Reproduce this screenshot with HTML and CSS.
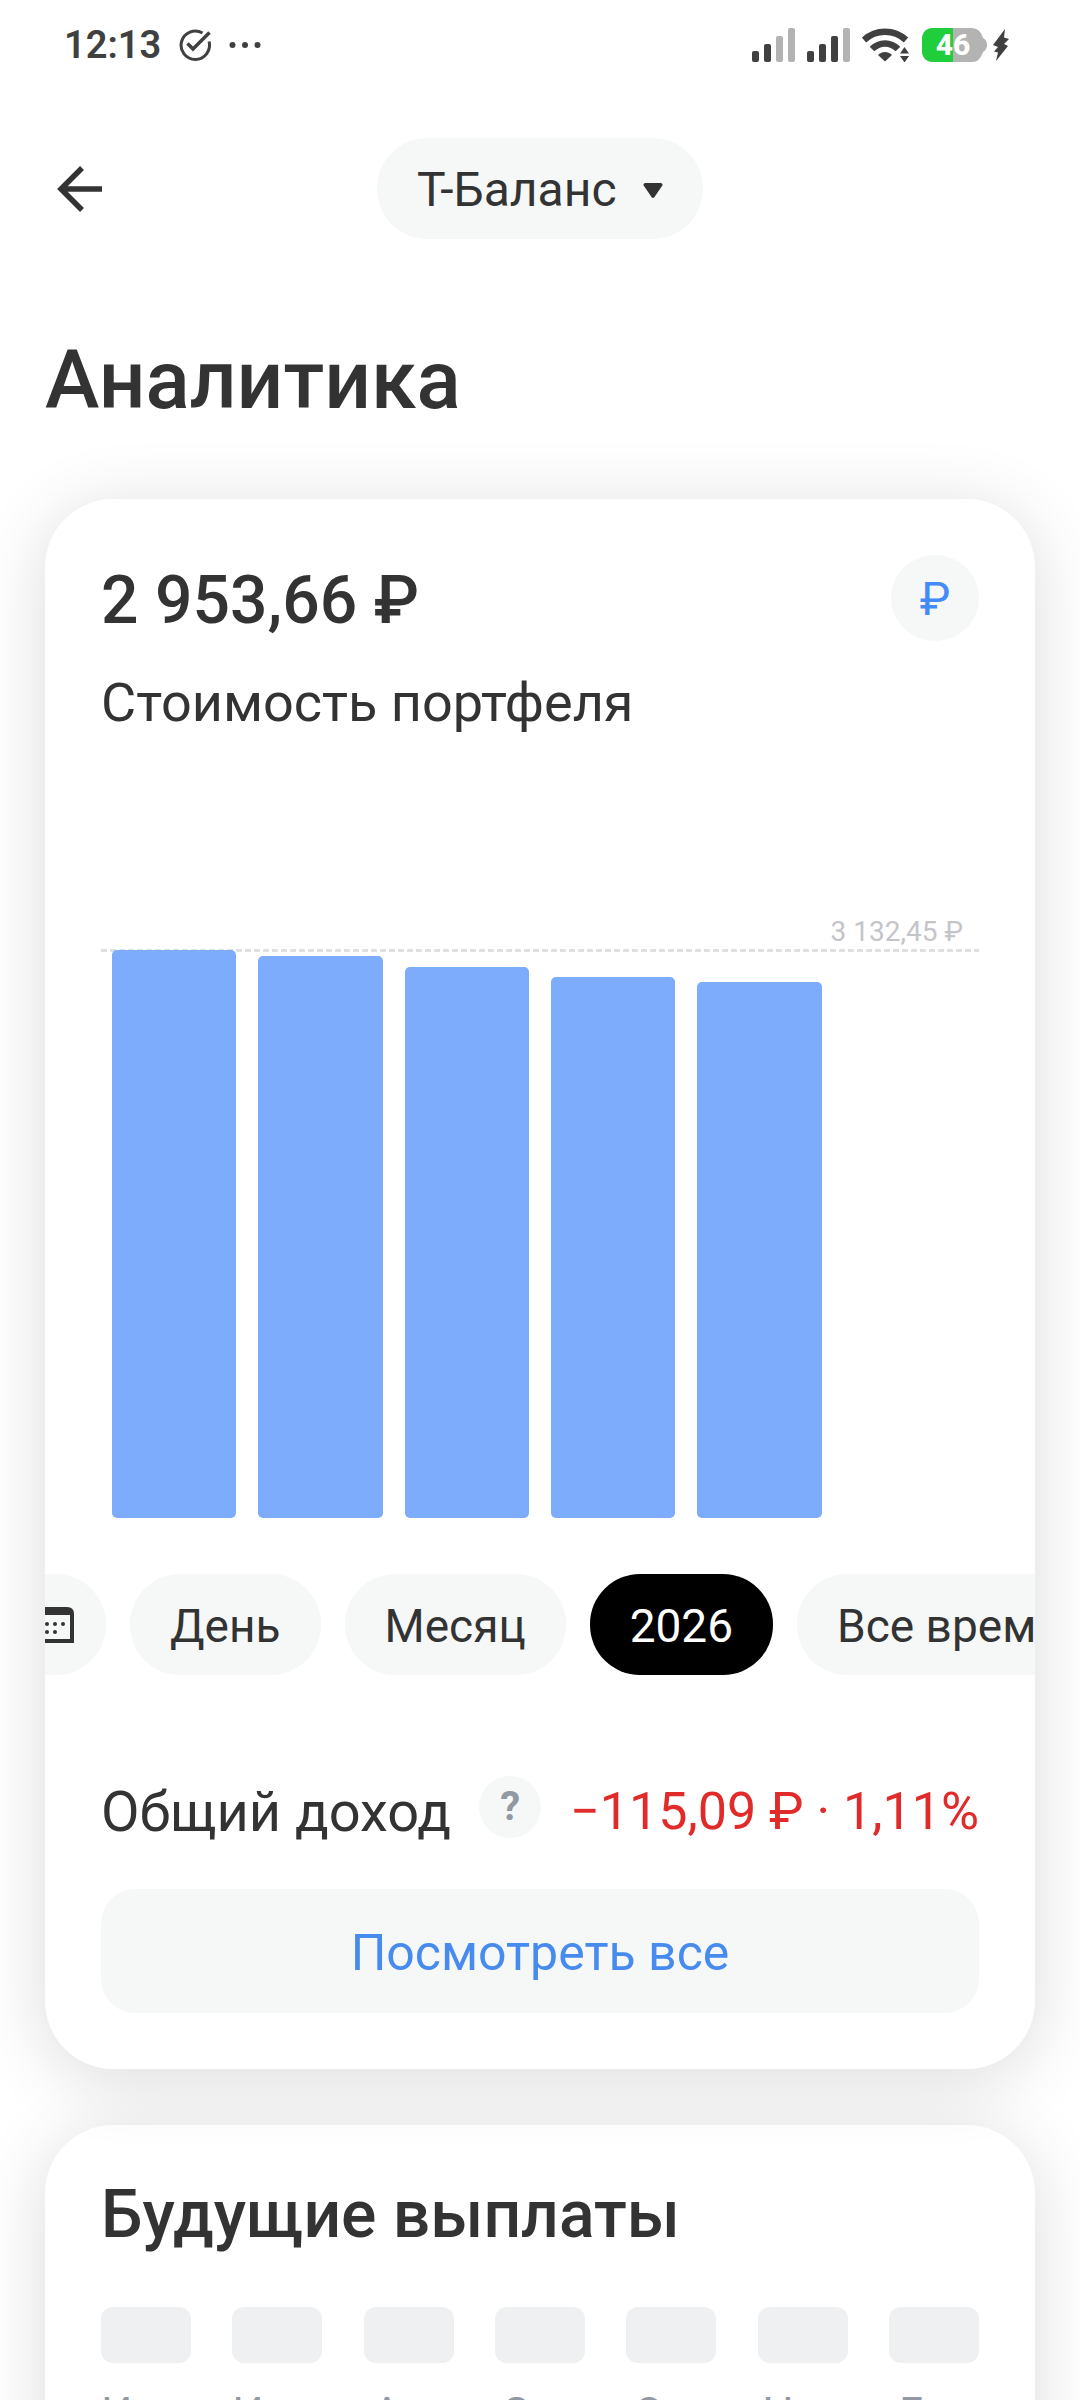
FILE: index.html
```
<!DOCTYPE html>
<html lang="ru">
<head>
    <meta charset="UTF-8">
    <meta name="viewport" content="width=device-width, initial-scale=1.0">
    <title>Аналитика</title>
    <link rel="stylesheet" href="styles.css">
</head>
<body>
<div class="screen">
    <div class="status">
        <div class="status-left">
            <span class="time">12:13</span>
            <svg class="check" width="32" height="32" viewBox="0 0 32 32" fill="none" stroke="#404040" stroke-width="3">
                <path d="M23.500 4A14.200 14.200 0 1 0 30 12.500"/>
                <path d="M8.500 14.500L14 20L30.500 3.500" stroke-width="3.500"/>
            </svg>
            <svg width="32" height="8" viewBox="0 0 32 8" fill="#404040">
                <circle cx="3.500" cy="4" r="3"/>
                <circle cx="16" cy="4" r="3"/>
                <circle cx="28.500" cy="4" r="3"/>
            </svg>
        </div>
        <div class="status-right">
            <svg width="43" height="34" viewBox="0 0 43 34" fill="#404040">
                <rect x="0" y="23" width="7" height="11" rx="2"/>
                <rect x="12" y="16" width="7" height="18" rx="2"/>
                <rect x="24" y="8" width="7" height="26" rx="2" fill="#b3b3b3"/>
                <rect x="36" y="0" width="7" height="34" rx="2" fill="#b3b3b3"/>
            </svg>
            <svg width="43" height="34" viewBox="0 0 43 34" fill="#404040">
                <rect x="0" y="23" width="7" height="11" rx="2"/>
                <rect x="12" y="16" width="7" height="18" rx="2"/>
                <rect x="24" y="8" width="7" height="26" rx="2"/>
                <rect x="36" y="0" width="7" height="34" rx="2" fill="#b3b3b3"/>
            </svg>
            <svg width="48" height="34" viewBox="0 0 48 34">
                <g fill="none" stroke="#404040" stroke-width="6.500">
                    <path d="M2 12C14 1 32 1 44 12"/>
                    <path d="M10 21C17.500 13.500 28.500 13.500 36 21"/>
                </g>
                <path d="M16 27C20 23 26 23 30 27L23 33.500Z" fill="#404040"/>
                <path d="M42.500 19L47 25.500H38ZM42.500 34.500L38 28H47Z" fill="#404040"/>
            </svg>
            <div class="battery">
                <svg width="66" height="34" viewBox="0 0 66 34">
                    <path d="M12 0H50Q58 0 61 10Q65 12 65 17Q65 22 61 24Q58 34 50 34H12Q0 34 0 22V12Q0 0 12 0Z" fill="#b3b3b3"/>
                    <path d="M31 0H12Q0 0 0 12V22Q0 34 12 34H31Z" fill="#20ce3b"/>
                </svg>
                <span class="battery-level">46</span>
            </div>
            <svg class="bolt" width="18" height="34" viewBox="0 0 18 34" fill="#404040">
                <path d="M13 1L1 17L6 19L2 23.500L6 24.500L4 33L16 18L12 16L17 11L12 9.500Z"/>
            </svg>
        </div>
    </div>

    <header class="topbar">
        <button class="back" aria-label="Назад">
            <svg width="48" height="48" viewBox="0 0 48 48" fill="none" stroke="#333" stroke-width="5.500">
                <path d="M26 3L5 24L26 45M5 24H46"/>
            </svg>
        </button>
        <div class="account">
            <select aria-label="Счёт">
                <option>Т-Баланс</option>
            </select>
            <svg class="account-arrow" width="20" height="16" viewBox="0 0 20 16" fill="#333">
                <path d="M2 0H18Q20.500 1 19 3L11.500 14Q10 16 8.500 14L1 3Q-0.500 1 2 0Z"/>
            </svg>
        </div>
    </header>

    <h1>Аналитика</h1>

    <main>
        <section class="card portfolio">
            <div class="portfolio-head">
                <div>
                    <h2>2 953,66 ₽</h2>
                    <p class="subtitle">Стоимость портфеля</p>
                </div>
                <button class="currency" aria-label="Валюта: рубль">₽</button>
            </div>

            <div class="chart">
                <div class="chart-max">3 132,45 ₽</div>
                <div class="bars">
                    <div class="bar" style="height: 568px"></div>
                    <div class="bar" style="height: 562px"></div>
                    <div class="bar" style="height: 551px"></div>
                    <div class="bar" style="height: 541px"></div>
                    <div class="bar" style="height: 536px"></div>
                </div>
            </div>

            <div class="periods">
                <button class="chip chip-icon" aria-label="Выбрать даты">
                    <svg width="40" height="36" viewBox="0 0 40 36">
                        <path d="M2 7V34H38V7" fill="none" stroke="#333" stroke-width="4"/>
                        <path d="M0 8V7Q0 0 7 0H33Q40 0 40 7V8Z" fill="#333"/>
                        <g fill="#333">
                            <circle cx="13" cy="17" r="2"/>
                            <circle cx="21" cy="17" r="2"/>
                            <circle cx="29" cy="17" r="2"/>
                            <circle cx="13" cy="25" r="2"/>
                            <circle cx="21" cy="25" r="2"/>
                        </g>
                    </svg>
                </button>
                <button class="chip">День</button>
                <button class="chip">Месяц</button>
                <button class="chip active">2026</button>
                <button class="chip">Все время</button>
            </div>

            <div class="income">
                <span class="income-label">Общий доход</span>
                <button class="hint" aria-label="Подсказка">?</button>
                <span class="income-value">−115,09 ₽ · 1,11%</span>
            </div>

            <button class="show-all">Посмотреть все</button>
        </section>

        <section class="card payouts">
            <h2>Будущие выплаты</h2>
            <ul class="months">
                <li>Июн</li>
                <li>Июл</li>
                <li>Авг</li>
                <li>Сен</li>
                <li>Окт</li>
                <li>Ноя</li>
                <li>Дек</li>
            </ul>
        </section>
    </main>
</div>
</body>
</html>
```
FILE: styles.css
```
* {
    box-sizing: border-box;
}

body {
    margin: 0;
    background: #fff;
    color: #333;
    font-family: Roboto, "Noto Sans", sans-serif;
}

h1, h2, p, ul {
    margin: 0;
    padding: 0;
}

h1, h2 {
    font-weight: 500;
}

button, select {
    border: none;
    padding: 0;
    background: none;
    color: inherit;
    font: inherit;
    cursor: pointer;
}

svg {
    display: block;
    flex-shrink: 0;
}

.screen {
    height: 100vh;
    overflow: hidden;
}

/* status bar */
.status {
    display: flex;
    justify-content: space-between;
    align-items: center;
    height: 90px;
    padding: 0 70px 0 64px;
    color: #404040;
}

.status-left {
    display: flex;
    align-items: center;
    gap: 18px;
}

.status-right {
    display: flex;
    align-items: center;
    gap: 12px;
}

.time {
    font-size: 38px;
    font-weight: 600;
}

.battery {
    position: relative;
}

.battery-level {
    position: absolute;
    top: 0;
    left: 0;
    width: 62px;
    color: #fff;
    font-size: 30px;
    font-weight: 800;
    line-height: 34px;
    text-align: center;
}

.bolt {
    margin-left: -8px;
}

/* top bar */
.topbar {
    display: grid;
    grid-template-columns: 1fr auto 1fr;
    align-items: center;
    padding: 48px 56px 0;
}

.back {
    justify-self: start;
}

.account {
    position: relative;
}

.account select {
    appearance: none;
    height: 101px;
    padding: 2px 86px 0 40px;
    border-radius: 50px;
    background: #f6f8f8;
    font-size: 48px;
}

.account-arrow {
    position: absolute;
    top: 45px;
    right: 40px;
    pointer-events: none;
}

h1 {
    padding: 91px 45px 0;
    font-size: 82px;
    line-height: 100px;
}

/* cards */
main {
    display: flex;
    flex-direction: column;
    gap: 56px;
    padding: 69px 45px 0;
}

.card {
    padding: 56px;
    border-radius: 68px;
    background: #fff;
    box-shadow: 0 10px 72px rgba(0, 0, 0, 0.14);
}

.card h2 {
    font-size: 66px;
    line-height: 92px;
}

.portfolio {
    position: relative;
    z-index: 1;
}

.portfolio-head {
    display: flex;
    justify-content: space-between;
    align-items: flex-start;
}

.subtitle {
    padding-top: 18px;
    font-size: 54px;
    line-height: 76px;
}

.currency {
    width: 88px;
    height: 86px;
    padding-top: 2px;
    border-radius: 50%;
    background: #f6f8f8;
    color: #428bf9;
    font-size: 46px;
}

/* chart */
.chart {
    padding-top: 174px;
}

.chart-max {
    padding-right: 16px;
    color: #c4c5c8;
    font-size: 28px;
    line-height: 34px;
    text-align: right;
}

.bars {
    position: relative;
    display: grid;
    grid-template-columns: repeat(6, 1fr);
    gap: 22px;
    align-items: end;
    height: 569px;
    padding: 0 11px;
}

.bars::before {
    content: "";
    position: absolute;
    top: 0;
    left: 0;
    right: 0;
    height: 3px;
    background: repeating-linear-gradient(90deg, #dedfe0 0 6px, transparent 6px 9px);
}

.bar {
    position: relative;
    border-radius: 5px;
    background: #7cacfb;
}

/* period chips */
.periods {
    display: flex;
    gap: 24px;
    margin: 56px -56px 0;
    overflow: hidden;
}

.chip {
    flex-shrink: 0;
    height: 101px;
    padding: 2px 40px 0;
    border-radius: 50px;
    background: #f6f8f8;
    font-size: 46px;
    white-space: nowrap;
}

/* the row is shown scrolled a little to the right */
.chip-icon {
    margin-left: -43px;
    padding: 0 32px;
}

.chip.active {
    background: #000;
    color: #fff;
}

.income {
    display: flex;
    align-items: center;
    margin-top: 97px;
    font-size: 56px;
    line-height: 80px;
    white-space: nowrap;
}

.hint {
    flex-shrink: 0;
    width: 62px;
    height: 62px;
    margin: 0 0 10px 28px;
    border-radius: 50%;
    background: #f6f8f8;
    color: #9299a2;
    font-size: 40px;
    font-weight: 700;
    line-height: 62px;
}

.income-value {
    margin-left: auto;
    color: #e12a2a;
    font-size: 52px;
}

.show-all {
    display: block;
    width: 100%;
    height: 124px;
    margin-top: 37px;
    padding-top: 4px;
    border-radius: 34px;
    background: #f6f8f8;
    color: #478bee;
    font-size: 50px;
}

/* future payouts */
.payouts {
    padding-top: 44px;
}

.months {
    display: flex;
    justify-content: space-between;
    padding-top: 46px;
    list-style: none;
}

.months li {
    width: 90px;
    color: #9299a2;
    font-size: 44px;
    line-height: 54px;
    text-align: center;
}

.months li::before {
    content: "";
    display: block;
    height: 56px;
    margin-bottom: 24px;
    border-radius: 12px;
    background: #eef0f2;
}
```
